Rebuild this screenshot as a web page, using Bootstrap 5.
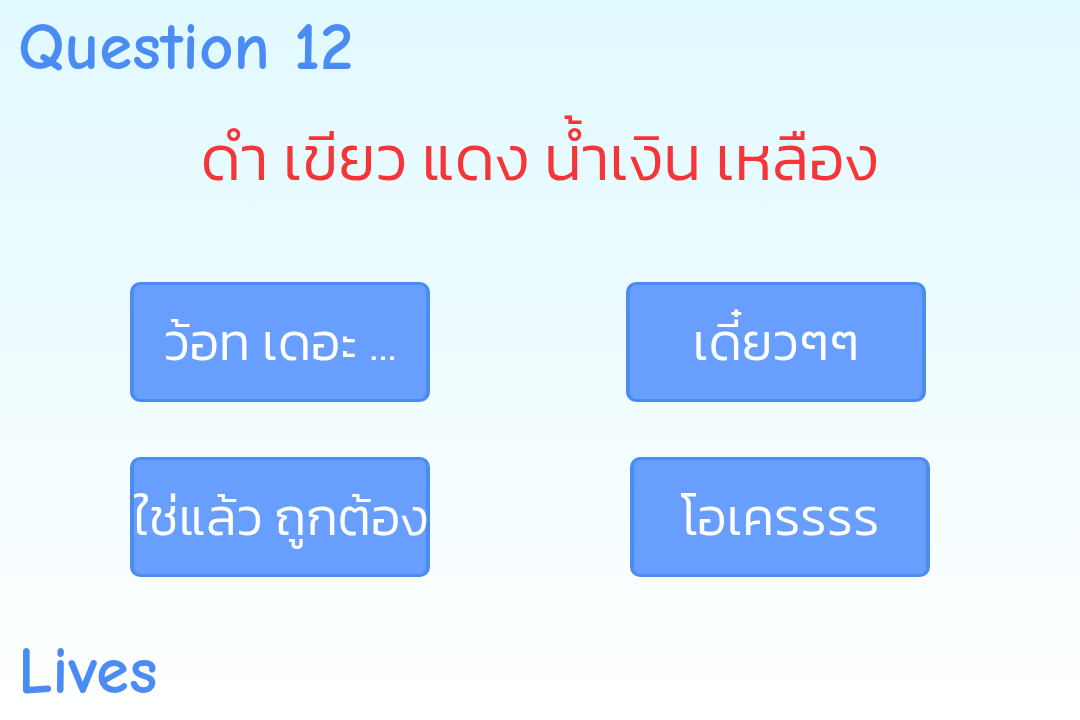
<!DOCTYPE html>
<html lang="th">
<head>
<meta charset="utf-8">
<meta name="viewport" content="width=device-width, initial-scale=1">
<title>Question 12</title>
<link href="https://cdn.jsdelivr.net/npm/bootstrap@5.3.0/dist/css/bootstrap.min.css" rel="stylesheet">
<style>
body{background:linear-gradient(#e0f9ff,#fff) fixed;font-family:Kanit,Prompt,"Noto Sans Thai","Open Sans",sans-serif;font-weight:300}
.quiz{padding:12px 18px}
.quiz-label{color:#4b8bf4;font-family:"Comic Sans MS","Comic Neue","Open Sans",sans-serif;font-size:67px;font-weight:700;line-height:72px}
.quiz-prompt{color:#f53538;font-size:63px;line-height:100px}
.answer-area{padding:74px 20px 0 0}
.answers{width:800px;max-width:100%;row-gap:55px}
.answer{--bs-btn-color:#fff;--bs-btn-bg:#689fff;--bs-btn-border-color:#4b8bf4;--bs-btn-font-weight:300;width:300px;height:120px;border-width:3px 4px;border-radius:10px;font-size:52px;line-height:72px;white-space:nowrap}
</style>
</head>
<body>
<main class="quiz d-flex flex-column min-vh-100">
<h1 class="quiz-label m-0">Question 12</h1>
<p class="quiz-prompt text-center m-0 pt-4">ดำ เขียว แดง น้ำเงิน เหลือง</p>
<div class="answer-area">
<div class="answers d-flex flex-column mx-auto">
<div class="d-flex flex-wrap justify-content-between pe-1">
<button type="button" class="btn answer p-0">ว้อท เดอะ ...</button>
<button type="button" class="btn answer p-0">เดี๋ยวๆๆ</button>
</div>
<div class="d-flex flex-wrap justify-content-between">
<button type="button" class="btn answer p-0">ใช่แล้ว ถูกต้อง</button>
<button type="button" class="btn answer p-0">โอเครรรร</button>
</div>
</div>
</div>
<footer class="quiz-label mt-auto">Lives</footer>
</main>
<script src="https://cdn.jsdelivr.net/npm/bootstrap@5.3.0/dist/js/bootstrap.bundle.min.js"></script>
</body>
</html>
